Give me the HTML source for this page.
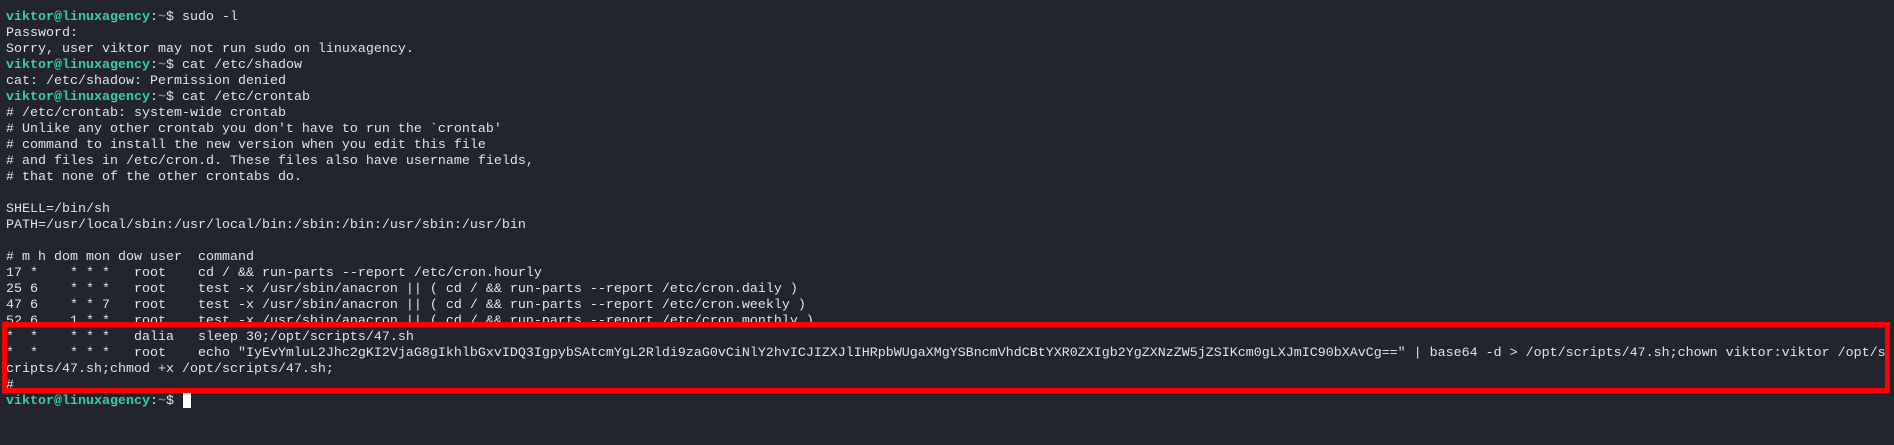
<!DOCTYPE html>
<html><head><meta charset="utf-8"><style>
html,body{margin:0;padding:0;background:#23252e;width:1894px;height:445px;overflow:hidden}
#t{position:absolute;left:6px;top:10px;font-family:"Liberation Mono",monospace;font-size:13.33px;line-height:16px;color:#e2e2e2;white-space:pre}
.g{color:#3ccba6;font-weight:bold}.b{color:#3b8eea;font-weight:bold}
#box{position:absolute;left:2px;top:322px;width:1878px;height:61px;border:5px solid #ff0000}
#cur{position:absolute;left:183px;top:393px;width:8px;height:15px;background:#fff}
</style></head><body>
<div id="t"><span class="g">viktor@linuxagency</span>:<span class="b">~</span>$ sudo -l
Password:
Sorry, user viktor may not run sudo on linuxagency.
<span class="g">viktor@linuxagency</span>:<span class="b">~</span>$ cat /etc/shadow
cat: /etc/shadow: Permission denied
<span class="g">viktor@linuxagency</span>:<span class="b">~</span>$ cat /etc/crontab
# /etc/crontab: system-wide crontab
# Unlike any other crontab you don't have to run the `crontab'
# command to install the new version when you edit this file
# and files in /etc/cron.d. These files also have username fields,
# that none of the other crontabs do.

SHELL=/bin/sh
PATH=/usr/local/sbin:/usr/local/bin:/sbin:/bin:/usr/sbin:/usr/bin

# m h dom mon dow user  command
17 *    * * *   root    cd / &amp;&amp; run-parts --report /etc/cron.hourly
25 6    * * *   root    test -x /usr/sbin/anacron || ( cd / &amp;&amp; run-parts --report /etc/cron.daily )
47 6    * * 7   root    test -x /usr/sbin/anacron || ( cd / &amp;&amp; run-parts --report /etc/cron.weekly )
52 6    1 * *   root    test -x /usr/sbin/anacron || ( cd / &amp;&amp; run-parts --report /etc/cron.monthly )
*  *    * * *   dalia   sleep 30;/opt/scripts/47.sh
*  *    * * *   root    echo "IyEvYmluL2Jhc2gKI2VjaG8gIkhlbGxvIDQ3IgpybSAtcmYgL2Rldi9zaG0vCiNlY2hvICJIZXJlIHRpbWUgaXMgYSBncmVhdCBtYXR0ZXIgb2YgZXNzZW5jZSIKcm0gLXJmIC90bXAvCg==" | base64 -d &gt; /opt/scripts/47.sh;chown viktor:viktor /opt/s
cripts/47.sh;chmod +x /opt/scripts/47.sh;
#
<span class="g">viktor@linuxagency</span>:<span class="b">~</span>$ </div>
<div id="box"></div>
<div id="cur"></div>
</body></html>
